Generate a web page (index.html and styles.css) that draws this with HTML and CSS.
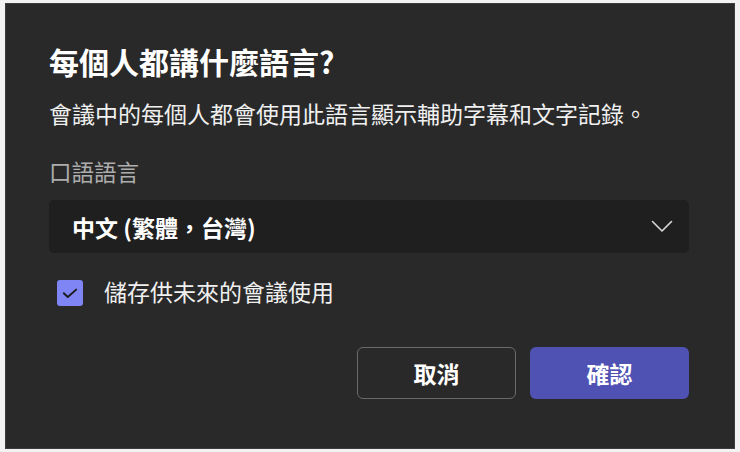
FILE: index.html
```html
<!DOCTYPE html>
<html lang="zh-Hant">
<head>
<meta charset="utf-8">
<title>口語語言</title>
<link rel="stylesheet" href="styles.css">
</head>
<body>
<div class="dialog">
  <h1 class="title">每個人都講什麼語言?</h1>
  <p class="desc">會議中的每個人都會使用此語言顯示輔助字幕和文字記錄。</p>
  <div class="label">口語語言</div>
  <div class="select">
    <span class="select-value">中文 (繁體，台灣)</span>
    <svg class="chevron" width="22" height="13" viewBox="0 0 22 13" aria-hidden="true">
      <path d="M1.5 1.5 L11 11 L20.5 1.5" fill="none" stroke="#d8d8d8" stroke-width="1.6" stroke-linecap="round" stroke-linejoin="round"/>
    </svg>
  </div>
  <label class="check-row">
    <span class="checkbox">
      <svg width="16" height="11" viewBox="0 0 16 11" aria-hidden="true">
        <path d="M1.8 5.2 L5.8 9 L14.2 1.6" fill="none" stroke="#1b1b1b" stroke-width="1.9" stroke-linecap="round" stroke-linejoin="round"/>
      </svg>
    </span>
    <span class="check-label">儲存供未來的會議使用</span>
  </label>
  <div class="actions">
    <button class="btn btn-secondary">取消</button>
    <button class="btn btn-primary">確認</button>
  </div>
</div>
</body>
</html>
```
FILE: styles.css
```css
* { box-sizing: border-box; }

html, body {
  margin: 0;
  padding: 0;
}

body {
  background: #f2f2f2;
  padding: 3px 5px;
  font-family: "Noto Sans CJK TC", "Noto Sans", sans-serif;
  color: #ffffff;
}

.dialog {
  width: 730px;
  height: 446px;
  background: #292929;
  border: 1px solid #3c3c3c;
  padding: 39px 45px 0 43px;
  display: flex;
  flex-direction: column;
}

.title {
  margin: 0;
  font-size: 30px;
  line-height: 36px;
  font-weight: 700;
  color: #ffffff;
}

.desc {
  margin: 18px 0 0;
  font-size: 23px;
  line-height: 32px;
  font-weight: 400;
  color: #f0f0f0;
}

.label {
  margin-top: 27px;
  font-size: 22.5px;
  line-height: 30px;
  color: #adadad;
}

.select {
  margin-top: 14px;
  height: 53px;
  background: #1f1f1f;
  border-radius: 5px;
  display: flex;
  align-items: center;
  justify-content: space-between;
  padding: 0 16px 0 23px;
}

.select-value {
  font-size: 23px;
  font-weight: 700;
  line-height: 30px;
  color: #ffffff;
}

.chevron {
  display: block;
}

.check-row {
  margin-top: 27px;
  display: flex;
  align-items: center;
  padding-left: 8px;
  height: 26px;
}

.checkbox {
  width: 26px;
  height: 26px;
  border-radius: 3px;
  background: #7f85f5;
  display: flex;
  align-items: center;
  justify-content: center;
}

.checkbox svg { display: block; }

.check-label {
  margin-left: 21px;
  font-size: 23px;
  line-height: 30px;
  padding-bottom: 4px;
  color: #f0f0f0;
}

.actions {
  margin-top: 41px;
  display: flex;
  justify-content: flex-end;
  gap: 14px;
}

.btn {
  width: 159px;
  height: 52px;
  border-radius: 6px;
  font-family: "Noto Sans CJK TC", "Noto Sans", sans-serif;
  font-size: 23px;
  font-weight: 700;
  color: #ffffff;
  cursor: pointer;
  padding: 0;
}

.btn-secondary {
  background: #292929;
  border: 1.5px solid #6a6a6a;
}

.btn-primary {
  background: #4f52b2;
  border: none;
}
```
